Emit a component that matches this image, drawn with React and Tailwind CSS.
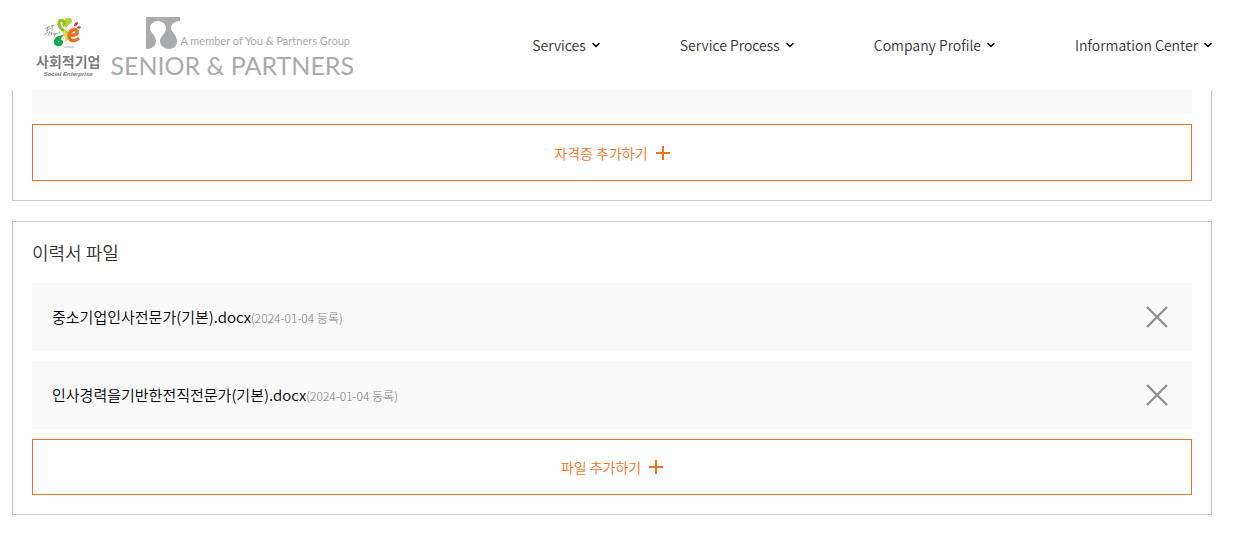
import { ChevronDown } from "lucide-react";

const menus = ["Services", "Service Process", "Company Profile", "Information Center"];

const files = [
  { id: 1, name: "중소기업인사전문가(기본).docx", date: "2024-01-04" },
  { id: 2, name: "인사경력을기반한전직전문가(기본).docx", date: "2024-01-04" },
];

const SocialEnterpriseMark = () => (
  <svg width="50" height="32" viewBox="0 0 50 32" fill="none" aria-hidden="true">
    <ellipse cx="26" cy="30" rx="6" ry="1" fill="#d5d5d5" />
    {/* Brush lettering */}
    <path
      d="M2 12l5-3M5 9l-1 6M3 14l5-3M8 9l3-1M9 8v6M1 18l4-3M7 14l-2 5M6 17l3-2-1 3 3-2v2l3-2M13 16l-2 4M14 17l3-2"
      stroke="#8f8f8f"
      strokeWidth="0.8"
    />
    {/* Petals */}
    <path d="M22 9C19 0 27-1 29 3c1 4-5 4-6 9z" fill="#b5d334" />
    <path d="M21 8c1-5-4-6-5-3-1 4 3 8 8 11" stroke="#8fc31f" strokeWidth="3" strokeLinecap="round" />
    <path d="M22 12c0 3 3 4 4 7 0 3-2 5-4 6 1-3 0-5-2-7 0-3 1-4 2-6z" fill="#d5e04d" />
    <path d="M21 18c-7 0-11 4-10 8 1 5 9 4 9-1 0-3-4-4-6-2 3 0 3 2 1 2" fill="#12a84b" />
    <path d="M27 18c5 1 8-1 7-4-2-3-8-1-8 5 0 5 5 6 9 3" stroke="#ee7020" strokeWidth="3.4" strokeLinecap="round" />
    <path d="M31 9c0-3 2-4 4-4 0 3-2 4-4 4zM34 11c1-2 3-2 4-1-1 2-2 2-4 1z" fill="#e52330" />
  </svg>
);

const PartnersMark = () => (
  <svg width="34" height="32" viewBox="0 0 34 32" fill="#a9abae" aria-hidden="true">
    <path d="M0 0h34v4c-5 0-9 3-9 7s6 7 6 13c0 5-4 8-8 8s-9-3-9-8c0-5 6-7 6-13 0-4-4-7-8-7s-8 3-8 7c0 5 6 7 6 13 0 5-4 8-10 8z" />
  </svg>
);

const PlusIcon = () => (
  <svg width="14" height="14" viewBox="0 0 14 14" stroke="currentColor" strokeWidth="2" aria-hidden="true">
    <path d="M7 0v14M0 7h14" />
  </svg>
);

const CloseIcon = () => (
  <svg width="30" height="30" viewBox="0 0 30 30" stroke="#909090" strokeWidth="2.4" aria-hidden="true">
    <path d="M5 5l20 20M25 5L5 25" />
  </svg>
);

const AddButton = ({ children, className }) => (
  <button
    type="button"
    className={`flex w-full items-center justify-center gap-2 border border-[#f37021] text-sm font-[350] text-[#f37021] ${className}`}
  >
    {children}
    <PlusIcon />
  </button>
);

const FileRow = ({ file }) => (
  <li className="flex h-[68px] items-center justify-between bg-[#f9f9f9] px-5">
    <p className="text-[15px] text-black">
      {file.name}
      <span className="text-xs font-light text-[#777]">({file.date} 등록)</span>
    </p>
    <button type="button" aria-label={`${file.name} 삭제`}>
      <CloseIcon />
    </button>
  </li>
);

const App = () => {
  return (
    <div className="bg-white pb-10 font-['Noto_Sans_CJK_KR',sans-serif] font-[350] text-[#333]">
      {/* Header */}
      <header className="flex h-[90px] items-center justify-between pr-[21px] pl-9">
        <a href="#" className="flex items-start gap-[10px] pt-2">
          <span className="flex flex-col items-center text-[#7b7b7b]">
            <SocialEnterpriseMark />
            <span className="mt-1 text-sm leading-4 font-bold">사회적기업</span>
            <span className="font-['Liberation_Sans',sans-serif] text-[6px] leading-[10px] font-bold italic">
              Social Enterprise
            </span>
          </span>
          <span className="flex flex-col font-['Lato',sans-serif] text-[#a9abae]">
            <span className="flex items-end pl-9">
              <PartnersMark />
              <span className="text-[11px] leading-4 font-normal">
                A member of You &amp; Partners Group
              </span>
            </span>
            <span className="text-[25px] leading-8 font-normal">SENIOR &amp; PARTNERS</span>
          </span>
        </a>
        <nav className="flex items-center gap-[78px]">
          {menus.map((menu) => (
            <button key={menu} type="button" className="flex items-center gap-1 text-sm">
              {menu}
              <ChevronDown size={12} strokeWidth={3} className="text-black" />
            </button>
          ))}
        </nav>
      </header>

      <main className="flex flex-col gap-5 pr-[23px] pl-3">
        {/* Certificates */}
        <section className="border border-t-0 border-[#ccc] px-[19px] pb-[19px]">
          <div className="mb-[10px] h-6 bg-[#f9f9f9]" />
          <AddButton className="h-[57px]">자격증 추가하기</AddButton>
        </section>

        {/* Resume files */}
        <section className="border border-[#ccc] px-[19px] pt-4 pb-[19px]">
          <h2 className="mb-[17px] text-lg leading-7">이력서 파일</h2>
          <ul className="mb-[10px] flex flex-col gap-[10px]">
            {files.map((file) => (
              <FileRow key={file.id} file={file} />
            ))}
          </ul>
          <AddButton className="h-14">파일 추가하기</AddButton>
        </section>
      </main>
    </div>
  );
};

export default App;
